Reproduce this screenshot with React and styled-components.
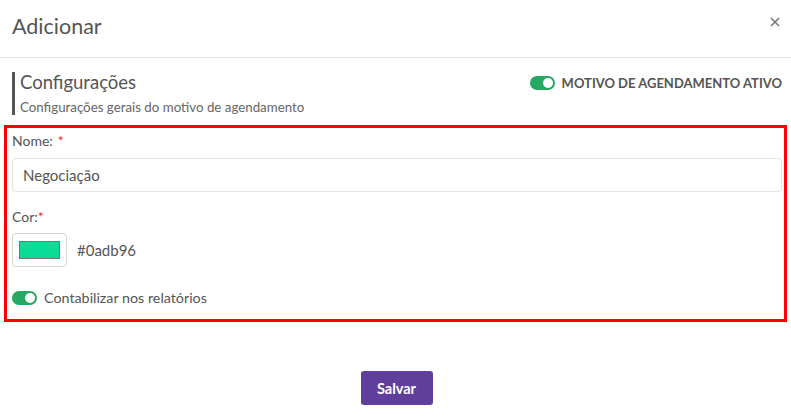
import React from "react";
import styled, { createGlobalStyle } from "styled-components";

const Global = createGlobalStyle`
  html, body { margin: 0; padding: 0; background: #fff; }
  body { font-family: "Lato", "Noto Sans", sans-serif; color: #555; }
  * { box-sizing: border-box; }
`;

const Modal = styled.div`
  width: 791px;
  height: 420px;
  background: #fff;
  display: flex;
  flex-direction: column;
`;

const Header = styled.div`
  height: 58px;
  border-bottom: 1px solid #e4e4e4;
  display: flex;
  align-items: center;
  justify-content: space-between;
  padding: 0 10px 6px 12px;
`;

const Title = styled.h1`
  margin: 0;
  font-size: 21.5px;
  font-weight: 400;
  color: #555;
`;

const Close = styled.button`
  border: none;
  background: none;
  padding: 0;
  width: 12px;
  height: 12px;
  margin-top: -8px;
  display: flex;
  cursor: pointer;
`;

const SectionRow = styled.div`
  display: flex;
  justify-content: space-between;
  align-items: flex-start;
  padding: 14px 9px 0 12px;
`;

const SectionTitle = styled.div`
  border-left: 3px solid #555;
  padding-left: 5px;
  height: 43px;
  display: flex;
  flex-direction: column;
`;

const Heading = styled.div`
  font-size: 18.5px;
  color: #555;
  line-height: 20px;
`;

const Sub = styled.div`
  font-size: 13.3px;
  color: #666;
  margin-top: 7px;
  line-height: 16px;
`;

const SwitchLabel = styled.label`
  display: flex;
  align-items: center;
  gap: 7px;
  font-size: ${(p) => (p.bold ? 13 : 14.3)}px;
  font-weight: ${(p) => (p.bold ? 700 : 400)};
  color: #555;
  margin-top: ${(p) => p.top || 0}px;
`;

const Track = styled.span`
  width: 25px;
  height: 14px;
  border-radius: 7px;
  background: #27a862;
  position: relative;
  flex-shrink: 0;
`;

const Knob = styled.span`
  position: absolute;
  right: 2px;
  top: 2px;
  width: 10px;
  height: 10px;
  border-radius: 50%;
  background: #fff;
`;

const Form = styled.div`
  margin: 10px 4px 0 4px;
  border: 3px solid #ff0000;
  padding: 4px 2px 13px 5px;
  display: flex;
  flex-direction: column;
`;

const Label = styled.div`
  font-size: 14px;
  color: #555;
  line-height: 18px;
  margin-top: ${(p) => p.top || 0}px;
`;

const Req = styled.span`
  color: #e03030;
  margin-left: ${(p) => p.gap || 0}px;
`;

const Input = styled.input`
  margin-top: 8px;
  width: 100%;
  height: 34px;
  border: 1px solid #e2e2e2;
  border-radius: 4px;
  padding: 0 10px;
  font-family: inherit;
  font-size: 15px;
  color: #555;
  outline: none;
`;

const ColorRow = styled.div`
  display: flex;
  align-items: center;
  gap: 10px;
  margin-top: 7px;
`;

const ColorBox = styled.div`
  width: 55px;
  height: 34px;
  border: 1px solid #d6d6d6;
  border-radius: 4px;
  display: flex;
  align-items: center;
  justify-content: center;
`;

const Swatch = styled.div`
  width: 41px;
  height: 18px;
  background: ${(p) => p.color};
  border: 1px solid #777;
`;

const Hex = styled.span`
  font-size: 15px;
  color: #555;
`;

const Footer = styled.div`
  display: flex;
  justify-content: center;
  padding-top: 49px;
`;

const Button = styled.button`
  width: 72px;
  height: 34px;
  border: none;
  border-radius: 3px;
  background: #5f3f9b;
  color: #fff;
  font-family: inherit;
  font-size: 14.5px;
  font-weight: 700;
  margin-left: 2px;
`;

const Switch = () => (
  <Track>
    <Knob />
  </Track>
);

export default function App() {
  return (
    <>
      <Global />
      <Modal>
        <Header>
          <Title>Adicionar</Title>
          <Close aria-label="Fechar">
            <svg width="12" height="12" viewBox="0 0 12 12">
              <path d="M2 2 L10 10 M10 2 L2 10" stroke="#777" strokeWidth="1.6" />
            </svg>
          </Close>
        </Header>
        <SectionRow>
          <SectionTitle>
            <Heading>Configurações</Heading>
            <Sub>Configurações gerais do motivo de agendamento</Sub>
          </SectionTitle>
          <SwitchLabel bold top={3}>
            <Switch />
            MOTIVO DE AGENDAMENTO ATIVO
          </SwitchLabel>
        </SectionRow>
        <Form>
          <Label>
            Nome:<Req gap={5}>*</Req>
          </Label>
          <Input defaultValue="Negociação" />
          <Label top={16}>
            Cor:<Req>*</Req>
          </Label>
          <ColorRow>
            <ColorBox>
              <Swatch color="#0adb96" />
            </ColorBox>
            <Hex>#0adb96</Hex>
          </ColorRow>
          <SwitchLabel top={22}>
            <Switch />
            Contabilizar nos relatórios
          </SwitchLabel>
        </Form>
        <Footer>
          <Button>Salvar</Button>
        </Footer>
      </Modal>
    </>
  );
}
